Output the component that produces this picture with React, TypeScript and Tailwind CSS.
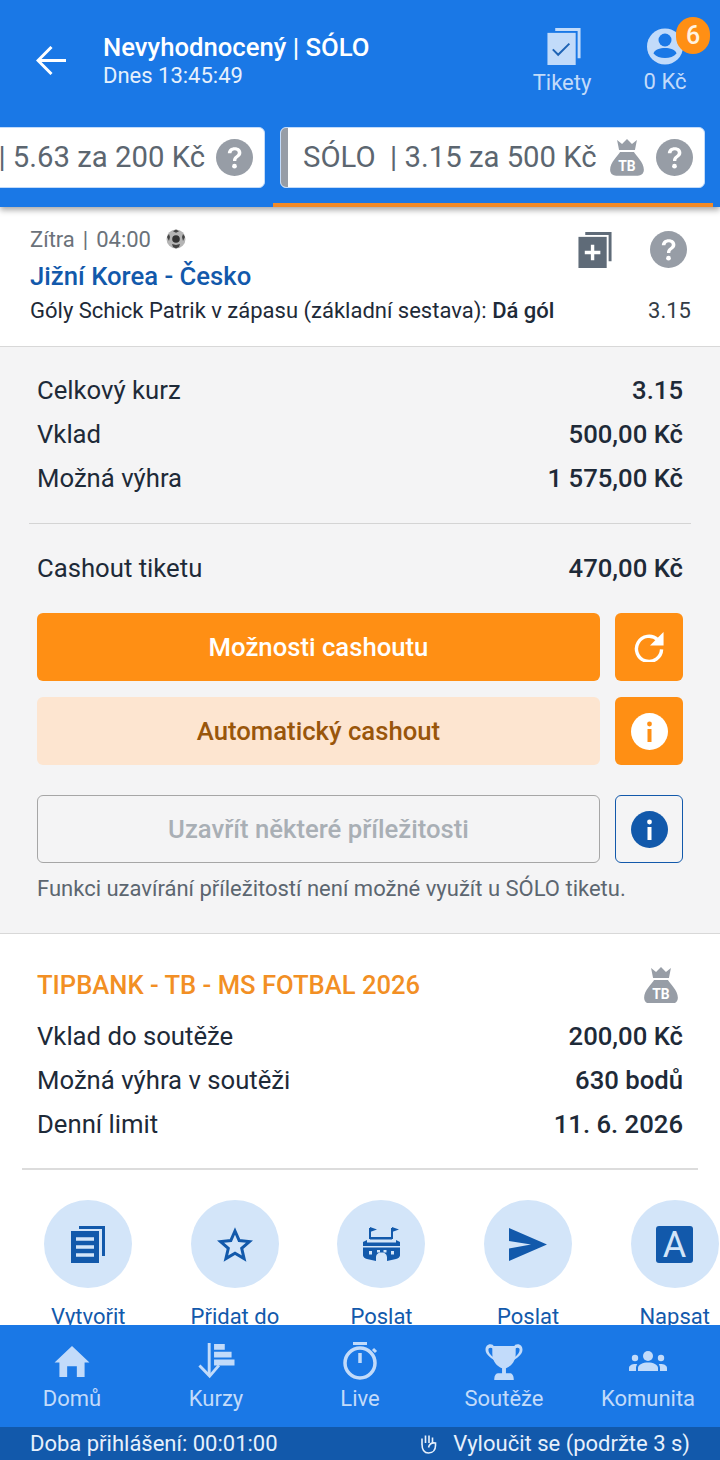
import React from "react";

const LB = "#c2dbfa";
const DK = "#1259ab";

function Help({ size = 37, color = "#979da6" }: { size?: number; color?: string }) {
  return (
    <svg width={size} height={size} viewBox="0 0 36 36" className="shrink-0">
      <circle cx="18" cy="18" r="18" fill={color} />
      <path d="M11.500 13.800c.3-3.800 3-5.800 6.700-5.800 3.900 0 6.500 2.100 6.500 5.300 0 2.200-1.100 3.500-2.900 4.700-1.500 1-2 1.700-2 3.400h-3.300c0-2.600.8-3.900 2.600-5.200 1.400-1 2.100-1.700 2.100-2.800 0-1.400-1.100-2.400-2.900-2.400-1.900 0-3.100 1.100-3.300 2.800z" fill="#fff" />
      <circle cx="18" cy="26.500" r="2.300" fill="#fff" />
    </svg>
  );
}

function Bag({ w = 34, color = "#979da6" }: { w?: number; color?: string }) {
  return (
    <svg width={w} height={w * 1.08} viewBox="0 0 34 37" className="shrink-0">
      <path d="M7 1l5 4 5-5 5 5 5-4-2 10H9z" fill={color} />
      <path d="M10 13h14c2 4 10 10 10 18 0 4-3 6-6 6H6c-3 0-6-2-6-6 0-8 8-14 10-18z" fill={color} />
      <text x="17" y="32" textAnchor="middle" fontFamily="Roboto" fontWeight="700" fontSize="14" fill="#fff">TB</text>
    </svg>
  );
}

function Row({ label, value }: { label: string; value: string }) {
  return (
    <div className="flex h-[44px] items-center justify-between text-[25.7px] text-[#1e2a38]">
      <span>{label}</span>
      <span className="font-medium">{value}</span>
    </div>
  );
}

function Action({ icon, label }: { icon: React.ReactNode; label: string }) {
  return (
    <div className="flex w-[146.6px] shrink-0 flex-col items-center">
      <div className="flex h-[88px] w-[88px] items-center justify-center rounded-full bg-[#d3e5f9]">{icon}</div>
      <div className="mt-[15px] text-[22px] leading-[28px] text-[#1259ab]">{label}</div>
    </div>
  );
}

function NavItem({ icon, label }: { icon: React.ReactNode; label: string }) {
  return (
    <div className="flex flex-1 flex-col items-center">
      <div className="flex h-[46px] items-center justify-center">{icon}</div>
      <div className="text-[22px] leading-[30px] text-[#c2dbfa]">{label}</div>
    </div>
  );
}

export default function App() {
  return (
    <div className="flex h-[1460px] w-[720px] flex-col overflow-hidden bg-white font-['Roboto',sans-serif]">
      <header className="relative z-10 h-[207px] shrink-0 bg-[#1a78e6] shadow-[0_3px_6px_rgba(0,0,0,0.35)]">
        <div className="flex h-[127px] items-start">
          <div className="flex w-[103px] shrink-0 justify-center pt-[46px]">
            <svg width="30" height="29" viewBox="0 0 30 29" fill="none" stroke="#fff" strokeWidth="3" className="ml-[-1px]">
              <path d="M30 14.500H3" />
              <path d="M15.500 1L2 14.500 15.500 28" />
            </svg>
          </div>
          <div className="flex-1 pt-[32px] text-white">
            <div className="text-[25.7px] font-medium leading-[30px]">Nevyhodnocený | SÓLO</div>
            <div className="text-[22px] leading-[28px] text-[#e6f0fc]">Dnes 13:45:49</div>
          </div>
          <div className="flex w-[86px] flex-col items-center pt-[28px]">
            <svg width="34" height="37" viewBox="0 0 34 38" className="ml-[3px]">
              <path d="M8 0h26v31h-3V3H8z" fill={LB} />
              <rect x="0" y="5" width="29" height="33" fill={LB} />
              <path d="M5.500 22l5.500 5.500L22.500 16" fill="none" stroke="#1e63b5" strokeWidth="2" />
            </svg>
            <div className="mt-[3px] text-[22px] leading-[30px] text-[#c2dbfa]">Tikety</div>
          </div>
          <div className="relative ml-[15px] mr-[10px] flex w-[90px] flex-col items-center pt-[28px]">
            <svg width="36" height="37" viewBox="0 0 36 36">
              <circle cx="18" cy="18" r="18" fill={LB} />
              <circle cx="18" cy="11.500" r="6.500" fill="#1a78e6" />
              <path d="M6.500 25c1-4 6.500-5.500 11.500-5.500S28.500 21 29.500 25c-2.500 3-7 4.500-11.500 4.500S9 28 6.500 25z" fill="#1a78e6" />
            </svg>
            <div className="mt-[2px] text-[22px] leading-[30px] text-[#c2dbfa]">0 Kč</div>
            <div className="absolute left-[56px] top-[17px] flex h-[37px] w-[34px] items-center justify-center rounded-full bg-[#ff8f14] text-[25px] font-medium text-[#fff3e0]">6</div>
          </div>
        </div>
        <div className="flex h-[61px] justify-end gap-[15px] overflow-hidden pr-[15px]">
          <div className="flex h-[61px] w-[420px] shrink-0 items-center justify-end gap-[11px] rounded-[6px] border border-[#c2dbfa] bg-white pr-[11px] text-[29.3px] text-[#5c6670]">
            <span className="whitespace-nowrap">| 5.63 za 200 Kč</span>
            <Help />
          </div>
          <div className="flex h-[61px] w-[425px] shrink-0 items-center overflow-hidden rounded-[6px] border border-[#c2dbfa] bg-white pr-[11px] text-[29.3px] text-[#5c6670]">
            <div className="h-full w-[7px] shrink-0 bg-[#979da6]" />
            <span className="ml-[15px] whitespace-nowrap">SÓLO &nbsp;| 3.15 za 500 Kč</span>
            <div className="ml-auto"><Bag /></div>
            <div className="ml-[12px]"><Help /></div>
          </div>
        </div>
        <div className="ml-[273px] mt-[15px] h-[4px] w-[440px] bg-[#f28a26]" />
      </header>

      <main className="min-h-0 flex-1 overflow-hidden">
        <section className="flex h-[140px] items-start border-b border-[#d8d8d8] bg-white pl-[30px] pr-[29px] pt-[19px]">
          <div className="flex-1">
            <div className="flex h-[26px] items-center text-[22px] text-[#6b727a]">
              <span>Zítra</span>
              <span className="ml-[8px]">|</span>
              <span className="ml-[8px]">04:00</span>
              <svg width="20" height="20" viewBox="0 0 20 20" className="ml-[15px]">
                <circle cx="10" cy="10" r="9.500" fill="#b5b5b5" />
                <circle cx="10" cy="10" r="3.800" fill="#333" />
                <path d="M10 .5l3 1.800-3 1.500-3-1.500zM1 8l2-3 1 3-1 4zM19 8l-2-3-1 3 1 4zM7 18l-1-3 4 1 4-1-1 3-3 1.500z" fill="#444" />
              </svg>
            </div>
            <div className="mt-[8px] text-[25.7px] font-medium leading-[32px] text-[#1259ab]">Jižní Korea - Česko</div>
            <div className="mt-[4px] flex items-center justify-between text-[22px] leading-[30px] text-[#1e2a38]">
              <span>Góly Schick Patrik v zápasu (základní sestava): <span className="font-medium">Dá gól</span></span>
              <span className="text-[#333c46]">3.15</span>
            </div>
          </div>
        </section>

        <section className="relative h-[587px] border-b border-[#d8d8d8] bg-[#f4f4f5] px-[37px] pt-[21px]">
          <div className="absolute right-[33px] top-[-116px] flex items-center gap-[38px]">
            <svg width="34" height="36" viewBox="0 0 34 37">
              <path d="M7 0h27v30h-3V3H7z" fill="#5f6b78" />
              <rect x="0" y="5" width="29" height="32" fill="#5f6b78" />
              <path d="M14.500 13v16M6.500 21h16" stroke="#fff" strokeWidth="3.500" />
            </svg>
            <Help size={37} />
          </div>
          <Row label="Celkový kurz" value="3.15" />
          <Row label="Vklad" value="500,00 Kč" />
          <Row label="Možná výhra" value="1 575,00 Kč" />
          <div className="mx-[-8px] mt-[23px] h-px bg-[#d4d4d4]" />
          <div className="mt-[22px]"><Row label="Cashout tiketu" value="470,00 Kč" /></div>
          <div className="mt-[23px] flex gap-[15px]">
            <div className="flex h-[68px] flex-1 items-center justify-center rounded-[6px] bg-[#ff8f14] text-[25.7px] font-medium text-white">Možnosti cashoutu</div>
            <div className="flex h-[68px] w-[68px] items-center justify-center rounded-[6px] bg-[#ff8f14]">
              <svg width="31" height="30" viewBox="0 0 32 31" fill="none">
                <path d="M24.500 8A13 13 0 1 0 28.500 18" stroke="#fff" strokeWidth="3.500" />
                <path d="M30.500 0v14h-14z" fill="#fff" />
              </svg>
            </div>
          </div>
          <div className="mt-[16px] flex gap-[15px]">
            <div className="flex h-[68px] flex-1 items-center justify-center rounded-[6px] bg-[#fde5d0] text-[25.7px] font-medium text-[#99560b]">Automatický cashout</div>
            <div className="flex h-[68px] w-[68px] items-center justify-center rounded-[6px] bg-[#ff8f14]">
              <svg width="37" height="37" viewBox="0 0 37 37">
                <circle cx="18.500" cy="18.500" r="18.500" fill="#fff" />
                <circle cx="18.500" cy="11" r="2.400" fill="#ff8f14" />
                <rect x="16.500" y="16" width="4" height="13" fill="#ff8f14" />
              </svg>
            </div>
          </div>
          <div className="mt-[30px] flex gap-[15px]">
            <div className="flex h-[68px] flex-1 items-center justify-center rounded-[6px] border border-[#a6a6a6] text-[25.7px] font-medium text-[#a9afb5]">Uzavřít některé příležitosti</div>
            <div className="flex h-[68px] w-[68px] items-center justify-center rounded-[6px] border border-[#1259ab]">
              <svg width="37" height="37" viewBox="0 0 37 37">
                <circle cx="18.500" cy="18.500" r="18.500" fill={DK} />
                <circle cx="18.500" cy="11" r="2.400" fill="#fff" />
                <rect x="16.500" y="16" width="4" height="13" fill="#fff" />
              </svg>
            </div>
          </div>
          <div className="mt-[11px] text-[22px] leading-[30px] text-[#5c6670]">Funkci uzavírání příležitostí není možné využít u SÓLO tiketu.</div>
        </section>

        <section className="bg-white">
          <div className="px-[37px] pt-[31px]">
            <div className="flex h-[40px] items-center justify-between">
              <span className="text-[25.6px] font-medium text-[#f28f24]">TIPBANK - TB - MS FOTBAL 2026</span>
              <div className="mr-[5px]"><Bag /></div>
            </div>
            <div className="mt-[9px]">
              <Row label="Vklad do soutěže" value="200,00 Kč" />
              <Row label="Možná výhra v soutěži" value="630 bodů" />
              <Row label="Denní limit" value="11. 6. 2026" />
            </div>
          </div>
          <div className="mx-[22px] mt-[22px] h-[2px] bg-[#dcdcdc]" />
          <div className="mt-[30px] flex pl-[15px]">
            <Action
              label="Vytvořit"
              icon={
                <svg width="34" height="37" viewBox="0 0 34 37">
                  <path d="M8 0h26v30h-3V3H8z" fill={DK} />
                  <rect x="0" y="5" width="28" height="32" fill={DK} />
                  <path d="M5 13h18M5 21h18M5 29h18" stroke="#d3e5f9" strokeWidth="3.500" />
                </svg>
              }
            />
            <Action
              label="Přidat do"
              icon={
                <svg width="36" height="35" viewBox="0 0 36 35" fill="none">
                  <path d="M18 4l4.200 9.600 10.300 1-7.800 6.800 2.400 10.200L18 26.200 8.900 31.600l2.400-10.200L3.500 14.600l10.300-1z" stroke={DK} strokeWidth="3" />
                </svg>
              }
            />
            <Action
              label="Poslat"
              icon={
                <svg width="37" height="34" viewBox="0 0 37 34">
                  <path d="M7 1v11M29 1v11" stroke={DK} strokeWidth="2" />
                  <path d="M7 0l7 2.500L7 5zM29 0l7 2.500-7 2.500z" fill={DK} />
                  <path d="M7 10h22v2.500H7z" fill={DK} />
                  <path d="M0 15l4-2v2.500h29V13l4 2v4H0z" fill={DK} />
                  <path d="M0 20.500h37v8c0 1.500-2 3-4 3.500l-9 2v-3.500c0-3-2-5-5.500-5S13 27.500 13 30.500V34l-9-2c-2-.5-4-2-4-3.500z" fill={DK} />
                  <path d="M6 24h3v3.500H6zM14 23h3v2.500h-3zM20.500 23h3v2.500h-3zM28 24h3v3.500h-3z" fill="#d3e5f9" />
                </svg>
              }
            />
            <Action
              label="Poslat"
              icon={
                <svg width="38" height="33" viewBox="0 0 38 33">
                  <path d="M0 0l38 16.500L0 33V20.500l22-4L0 13z" fill={DK} />
                </svg>
              }
            />
            <Action
              label="Napsat"
              icon={
                <svg width="37" height="37" viewBox="0 0 37 37">
                  <rect width="37" height="37" rx="3" fill={DK} />
                  <text x="18.500" y="31" textAnchor="middle" fontFamily="Roboto" fontWeight="400" fontSize="36" fill="#d3e5f9">A</text>
                </svg>
              }
            />
          </div>
        </section>
      </main>

      <nav className="z-10 flex h-[102px] shrink-0 bg-[#1a78e6] pt-[13px]">
        <NavItem
          label="Domů"
          icon={
            <svg width="36" height="31" viewBox="0 0 36 32">
              <path d="M18 0L36 17h-5v15h-8V21H13v11H5V17H0z" fill={LB} />
            </svg>
          }
        />
        <NavItem
          label="Kurzy"
          icon={
            <svg width="38" height="37" viewBox="0 0 38 38" fill="none">
              <path d="M12 0v34" stroke={LB} strokeWidth="3" />
              <path d="M2 23l10.500 11L22 23" stroke={LB} strokeWidth="3" />
              <path d="M17 1h11v6H17zM17 9h18v6H17zM17 17h21v6H17z" fill={LB} />
            </svg>
          }
        />
        <NavItem
          label="Live"
          icon={
            <svg width="36" height="38" viewBox="0 0 36 38" fill="none">
              <circle cx="18" cy="21" r="15" stroke={LB} strokeWidth="3.500" />
              <path d="M11 1.500h14" stroke={LB} strokeWidth="3" />
              <path d="M18 11v10" stroke={LB} strokeWidth="3.500" />
              <path d="M31 7l3 3" stroke={LB} strokeWidth="3" />
            </svg>
          }
        />
        <NavItem
          label="Soutěže"
          icon={
            <svg width="38" height="37" viewBox="0 0 38 38" fill={LB}>
              <path d="M7 3h24v8c0 8-5 13-10 15v5h4c2 0 4 2 4 6v1H9v-1c0-4 2-6 4-6h4v-5C12 24 7 19 7 11z" />
              <path d="M8 2C3 0 0 3 0 7c0 5 6 9 11 12l-1-3C7 14 3 11 3 7c0-2 2-3 5-1zM30 2c5-2 8 1 8 5 0 5-6 9-11 12l1-3c3-2 7-5 7-9 0-2-2-3-5-1z" />
            </svg>
          }
        />
        <NavItem
          label="Komunita"
          icon={
            <svg width="38" height="20" viewBox="0 0 38 20" fill={LB}>
              <circle cx="19" cy="5" r="5" />
              <circle cx="6" cy="7" r="3.200" />
              <circle cx="32" cy="7" r="3.200" />
              <path d="M9 20v-3c0-3.500 5-5.500 10-5.500s10 2 10 5.500v3z" />
              <path d="M0 20v-3c0-2.500 3-4 6.500-4 .7 0 1.300 0 1.800.2C7.500 14.200 7 15.500 7 17v3zM38 20v-3c0-2.500-3-4-6.500-4-.7 0-1.300 0-1.800.2.800 1 1.300 2.300 1.300 3.800v3z" />
            </svg>
          }
        />
      </nav>

      <footer className="flex h-[33px] shrink-0 items-center justify-between bg-[#1259ab] pl-[30px] pr-[30px] text-[22px] text-[#e6f0fc]">
        <span>Doba přihlášení: 00:01:00</span>
        <span className="flex items-center gap-[16px]">
          <svg width="18" height="20" viewBox="0 0 18 20" fill="none" stroke="#e6f0fc" strokeWidth="1.600">
            <path d="M3 11V4.500M6.500 9V1.500M10 9V1.500M13.500 9V3.500M3 10c0 5 1 9 6.500 9 5 0 7-4 7-7.500V9c-3-.5-6 .5-7 4.500" />
          </svg>
          <span>Vyloučit se (podržte 3 s)</span>
        </span>
      </footer>
    </div>
  );
}
